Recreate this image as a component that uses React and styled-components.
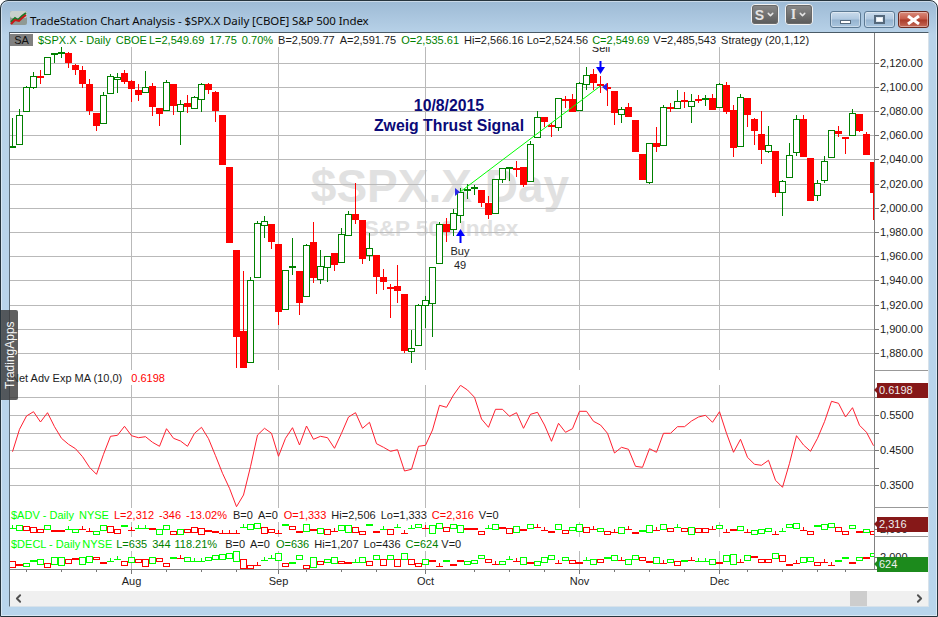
import styled, { createGlobalStyle } from "styled-components";
import { ChevronLeft, ChevronRight, ChevronDown } from "lucide-react";

const GREEN = "#008000";
const LIME = "#00ff00";
const RED = "#ff0000";
const INK = "#1c1c1c";
const GRID = "#b9b9b9";

// [colour, body top, body bottom, high, low] in screen pixels, first bar is 17 bars before Aug 3
const BARS = [
  ["g",147,147,118,147],["g",115,144,109,144],["g",87,111,86,111],["g",76,87,72,89],["r",77,77,70,84],
  ["g",57,74,57,74],["g",54,54,53,63],["g",53,53,47,58],["r",53,63,52,68],["r",65,70,64,75],
  ["r",70,84,66,88],["r",84,111,79,115],["r",113,126,113,131],["g",95,123,92,124],["g",76,93,74,93],
  ["g",77,79,73,93],["r",73,82,70,84],["r",81,89,80,102],["r",90,95,84,101],["g",87,92,71,92],
  ["r",86,107,83,116],["r",108,114,108,126],["g",82,110,80,110],["r",84,106,84,115],["g",104,111,100,145],
  ["r",103,107,95,113],["g",97,108,96,109],["g",84,99,83,112],["r",84,90,83,94],["r",92,111,91,122],
  ["r",115,165,115,165],["r",167,243,167,243],["r",250,337,250,368],["r",331,368,271,368],["g",280,362,277,362],
  ["g",223,277,221,277],["g",221,225,216,238],["r",224,242,224,249],["r",244,312,244,325],["g",270,309,270,309],
  ["g",267,267,238,275],["r",271,303,271,315],["g",245,296,244,296],["r",242,278,222,283],["g",266,279,250,284],
  ["g",256,267,256,282],["r",253,265,253,271],["g",234,262,228,262],["g",214,235,211,235],["r",214,220,183,224],
  ["r",220,259,220,264],["g",248,255,233,261],["r",255,277,255,294],["r",277,282,269,290],["r",288,288,284,318],
  ["r",286,291,265,303],["r",294,351,294,353],["g",348,351,330,363],["g",305,345,304,345],["g",300,305,296,328],
  ["g",267,303,267,337],["g",224,263,222,263],["r",224,232,218,242],["g",213,229,209,236],["g",192,215,188,223],
  ["g",190,190,184,199],["g",188,188,185,195],["r",190,203,190,207],["r",203,215,196,219],["g",179,213,179,213],
  ["g",168,179,168,183],["g",168,168,167,181],["r",169,169,161,177],["r",167,185,167,187],["g",144,181,141,181],
  ["g",117,137,111,137],["r",117,122,117,127],["r",126,126,123,137],["g",98,127,98,131],["r",100,100,96,108],
  ["r",99,112,94,112],["g",83,110,82,110],["g",75,84,67,90],["r",74,83,69,90],["r",85,85,76,93],
  ["r",88,88,83,106],["r",91,113,91,125],["g",109,114,107,123],["r",107,117,103,117],["r",120,152,120,152],
  ["r",154,180,154,180],["g",143,182,143,184],["r",143,147,127,152],["g",107,145,105,145],["r",108,108,103,112],
  ["g",101,108,90,108],["r",101,101,92,108],["g",101,106,94,123],["r",100,100,95,103],["g",99,99,95,106],
  ["r",98,110,94,110],["g",84,107,83,107],["r",85,112,82,114],["r",110,148,105,157],["g",97,146,94,146],
  ["r",98,115,98,127],["r",119,131,118,145],["r",134,150,111,164],["g",145,151,126,153],["r",151,193,151,197],
  ["g",181,192,180,216],["g",155,177,143,177],["g",119,152,115,156],["r",119,157,115,157],["r",158,201,158,201],
  ["g",183,195,180,201],["g",161,180,156,183],["g",130,157,130,157],["r",131,134,126,137],["r",138,138,138,154],
  ["g",113,135,109,135],["r",114,131,114,132],["r",134,155,132,155],["r",162,193,162,220],
];

const NET_ADV = [
  451.7,429.3,416,411.7,422,412.7,426.7,438.3,444.3,448.7,456.7,467.3,474.3,454.3,436.3,435.3,426.3,435.7,437.7,436.7,
  442.3,446.3,428.7,438.3,441,446.3,433.3,427.3,438.7,455.7,473.3,488.3,506.7,495,466.7,435,428.3,433.3,456.3,438.3,427.7,
  445,426,439.3,436.3,437.7,448.3,433.3,417,412.7,428.3,
  422.3,443.7,447.3,451.3,449.7,471,469.3,446.3,445.3,430,
  405.3,407.3,395,385.3,390,397.3,419,427.3,409.3,409.3,
  416.3,412.7,428.3,414.3,412.3,425,441.3,423.3,432.3,428.7,
  411.3,411.3,421.3,425,433.3,453,447.3,449.3,466.3,467.3,
  448.7,452.3,433.3,433.3,426.7,426.7,421,417,415.3,422.3,
  411.7,433.3,452.3,439.3,457.3,464.3,465.3,460.3,480.3,487.3,
  463.3,435.7,445,451.3,438.3,421.7,401.3,403.3,417,407.7,
  425.3,432.3,445.7,
];

// g/r hollow body "top-bottom", g/r thin cross, G/R thick dash; 1/3 pixel units below y=500
const ADV = "g84 g74-88 r78-90 r80-96 r88-96 g76-88 R92 R92 g88 g88-98 r88 r92 g94-102 g76-92 r78-95 r86-98 G78 r90 g85 g85 R88 g88-102 g74-86 r92-102 g88-102 r88-96 r80-96 r84-102 R92 R97 r98 r98 r100 g80 g72-86 g68-82 r80-98 r88-98 r98 G76 r78-88 R97 g72-92 R90 g84-100 r86-102 r92 g76-92 g74-94 r80-96 r92-102 G76 R97 g88 r88-102 g80 r98 g85 g72-82 r85 g76-100 g68-82 r82-94 g72-84 g76-96 R86 R86 r94-103 g85 g73-88 R83 r85-100 g78-96 R90 g73-85 r80 r90 R96 g72-88 r90-100 g82-92 g72-92 r82-96 r87 g84-94 r92-100 r96 g82-100 r86 R98 G92 g76-96 r90 g73-88 r85-94 g80 r85-94 g80-100 r83-94 r83-94 r87 g76-86 r96 R91 g79-91 r97 g91-103 g86-97 g85-94 r102 g92 g72-82 g70-85 r90 r92-100 G78 g72-88 g70-82 r82-94 r92-100 g76-86 R96 g88-97 r94-103".split(" ");
const DECL = "r184-202 R194 g190-200 G184 g176-190 r188-200 g172-192 g170-193 r176-187 R176 g172-193 g168-186 r170-177 R190 g183 g176 r184-196 g172-188 r178-188 r178-199 g172-190 r175-185 r190-200 G173 r173 g172-184 g182 g184 g172-182 g165-178 g162-178 g160-176 g154-184 r176-202 r194-202 r194 g180 g175 g160-182 r190-200 G188 g165-176 r194-202 g170-200 r182-190 g178-188 g170-188 r184-190 R188 g185 g170-184 r184-195 g164-176 r176-193 g165-178 r178-200 g158-176 r176-190 r188-198 g178-192 R182 r198 G182 R194 R184 g182-192 g180-190 g166-176 r176-186 r192 g182-192 g176 r183 g170-192 R190 g184-196 g172-186 g166-178 r190 g172-182 r180-190 R188 g180 g176-192 r178-187 G174 g164-180 r180 g176-192 g164-176 r172-180 R186 g172-190 r188 g178-188 r184-196 G182 r180 g182 g182 g176-192 R190 g166-184 g162-192 r186 g164-178 R172 r176-186 r178-187 g160-175 r166-184 R194 r190 g172-188 g172-184 r187-196 r187 r196 G182 G174 R190 g170-180 R175 g160-170".split(" ");

const MONTHS = [["Aug", 0], ["Sep", 21], ["Oct", 42], ["Nov", 64], ["Dec", 84]];
const WEEKS = [-15, -10, -5, 5, 10, 15, 25, 30, 35, 49, 54, 59, 69, 74, 79, 88, 93, 98, 102];
const PRICE_ROWS = [
  [63, "2,120.00"], [87, "2,100.00"], [111, "2,080.00"], [135, "2,060.00"], [159, "2,040.00"], [184, "2,020.00"],
  [208, "2,000.00"], [232, "1,980.00"], [256, "1,960.00"], [280, "1,940.00"], [305, "1,920.00"], [329, "1,900.00"], [353, "1,880.00"],
];
const NET_ROWS = [[397], [415, "0.5500"], [433], [450, "0.4500"], [468], [485, "0.3500"]];

const barX = (i) => 131.5 + 7 * i;
const lineX = (n) => barX(n - 17);

// [text, colour, gap after it]
const PRICE_LEGEND = [
  ["$SPX.X - Daily", GREEN, 5], ["CBOE", GREEN, 2], ["L=2,549.69", GREEN, 5], ["17.75", GREEN, 5], ["0.70%", GREEN, 5],
  ["B=2,509.77", INK, 5], ["A=2,591.75", INK, 5], ["O=2,535.61", GREEN, 5], ["Hi=2,566.16", INK, 3], ["Lo=2,524.56", INK, 4],
  ["C=2,549.69", GREEN, 4], ["V=2,485,543", INK, 5], ["Strategy (20,1,12)", INK, 0],
];
const ADV_LEGEND = [
  ["$ADV - Daily", LIME, 5], ["NYSE", LIME, 5], ["L=2,312", RED, 5], ["-346", RED, 5], ["-13.02%", RED, 6],
  ["B=0", INK, 5], ["A=0", INK, 6], ["O=1,333", RED, 5], ["Hi=2,506", INK, 5], ["Lo=1,333", INK, 5], ["C=2,316", RED, 5], ["V=0", INK, 0],
];
const DECL_LEGEND = [
  ["$DECL - Daily", LIME, 2], ["NYSE", LIME, 4], ["L=635", GREEN, 5], ["344", GREEN, 4], ["118.21%", GREEN, 8],
  ["B=0", INK, 5], ["A=0", INK, 6], ["O=636", GREEN, 5], ["Hi=1,207", INK, 5], ["Lo=436", INK, 5], ["C=624", GREEN, 3], ["V=0", INK, 0],
];

function Candle({ x, bar }) {
  const [c, top, bot, hi, lo] = bar;
  const color = c === "g" ? GREEN : RED;
  const flat = bot - top < 1;
  return (
    <g shapeRendering="crispEdges">
      <line x1={x} x2={x} y1={hi} y2={flat ? lo : top} stroke={color} />
      {!flat && <line x1={x} x2={x} y1={bot} y2={lo} stroke={color} />}
      {flat && <rect x={x - 3.5} y={top - 1} width={7} height={2} fill={color} />}
      {!flat && c === "r" && <rect x={x - 3.5} y={top} width={7} height={bot - top} fill={color} />}
      {!flat && c === "g" && <rect x={x - 3} y={top + 0.5} width={6} height={bot - top} fill="#fff" stroke={color} />}
    </g>
  );
}

function MiniCandle({ x, token }) {
  const kind = token[0];
  const color = kind.toLowerCase() === "g" ? LIME : RED;
  const [a, b] = token.slice(1).split("-").map((v) => 500 + Number(v) / 3);
  if (b) {
    return <rect x={x - 3} y={Math.round(a) + 0.5} width={6} height={Math.max(Math.round(b - a), 2)} fill="#fff" stroke={color} shapeRendering="crispEdges" />;
  }
  const y = Math.round(a);
  if (kind === "G" || kind === "R") {
    return <rect x={x - 3.5} y={y - 1} width={7} height={2} fill={color} shapeRendering="crispEdges" />;
  }
  return (
    <g stroke={color} shapeRendering="crispEdges">
      <line x1={x - 3.5} x2={x + 3.5} y1={y + 0.5} y2={y + 0.5} />
      <line x1={x} x2={x} y1={y - 3} y2={y + 1} />
    </g>
  );
}

function MonthLines({ y1, y2 }) {
  return MONTHS.map(([name, i]) => (
    <line key={name} x1={barX(i)} x2={barX(i)} y1={y1} y2={y2} stroke={GRID} shapeRendering="crispEdges" />
  ));
}

function Legend({ items }) {
  return items.map(([text, color, gap]) => (
    <LegendItem key={text} $color={color} $gap={gap}>{text}</LegendItem>
  ));
}

function PriceChart() {
  return (
    <Chart viewBox="10 47 864 324" width="864" height="324">
      <WatermarkBig x="440" y="202">$SPX.X Day</WatermarkBig>
      <WatermarkSmall x="441" y="236">S&amp;P 500 Index</WatermarkSmall>
      {PRICE_ROWS.map(([y]) => (
        <line key={y} x1="10" x2="874" y1={y + 0.5} y2={y + 0.5} stroke={GRID} shapeRendering="crispEdges" />
      ))}
      <MonthLines y1={47} y2={370} />
      {BARS.map((bar, n) => <Candle key={n} x={lineX(n)} bar={bar} />)}
      <line x1="460" y1="192" x2="601" y2="85.5" stroke={LIME} strokeWidth="1" />
      <polygon points="455,188 455,196 460,192" fill="#2a2ae8" />
      <polygon points="607,83 607,91 602,87" fill="#2a2ae8" />
      <polygon points="460.5,229 456,236 459.5,236 459.5,243 461.5,243 461.5,236 465,236" fill="#0000ff" />
      <polygon points="600.5,74 596,67 599.5,67 599.5,61 601.5,61 601.5,67 605,67" fill="#0000ff" />
      <Note x="460" y="255">Buy</Note>
      <Note x="460" y="269">49</Note>
      <Note x="601" y="52">Sell</Note>
      <Signal x="449" y="111">10/8/2015</Signal>
      <Signal x="449" y="131">Zweig Thrust Signal</Signal>
    </Chart>
  );
}

function NetChart() {
  const points = NET_ADV.map((y, n) => `${lineX(n)},${y}`).join(" ");
  return (
    <Chart viewBox="10 385 864 123" width="864" height="123">
      {NET_ROWS.map(([y]) => (
        <line key={y} x1="10" x2="874" y1={y + 0.5} y2={y + 0.5} stroke={GRID} shapeRendering="crispEdges" />
      ))}
      <MonthLines y1={385} y2={508} />
      <polyline points={points} fill="none" stroke="#ff2030" strokeWidth="1" />
    </Chart>
  );
}

function MiniChart({ tokens, top, height }) {
  return (
    <Chart viewBox={`10 ${top} 864 ${height}`} width="864" height={height}>
      <MonthLines y1={top} y2={top + height} />
      {tokens.map((token, n) => <MiniCandle key={n} x={lineX(n)} token={token} />)}
    </Chart>
  );
}

function ScaleLabels({ top, height, rows }) {
  return (
    <ScaleSvg viewBox={`875 ${top} 53 ${height}`} width="53" height={height}>
      {rows.map(([y, label]) => (
        <g key={y}>
          <line x1="875" x2="879" y1={y + 0.5} y2={y + 0.5} stroke="#777" shapeRendering="crispEdges" />
          {label && <AxisText x="880" y={y + 4}>{label}</AxisText>}
        </g>
      ))}
    </ScaleSvg>
  );
}

function TitleIcon() {
  return (
    <svg width="17" height="14" viewBox="0 0 17 14">
      <rect x="0" y="0" width="17" height="14" rx="2" fill="#8f9a94" />
      <rect x="0" y="0" width="17" height="7" rx="2" fill="#c9d0cc" />
      <polyline points="1,11 5,7 8,9 12,5 16,2" fill="none" stroke="#1c7a28" strokeWidth="2" />
      <polyline points="1,13 5,9 9,10 12,7 16,4" fill="none" stroke="#c81818" strokeWidth="2" />
    </svg>
  );
}

export default function App() {
  return (
    <>
      <Global />
      <Window>
        <TitleBar>
          <TitleIcon />
          <Title>TradeStation Chart Analysis - $SPX.X Daily [CBOE] S&amp;P 500 Index</Title>
          <Spacer />
          <ToolButton>S<ChevronDown size={9} strokeWidth={4} /></ToolButton>
          <ToolButton $serif>I<ChevronDown size={9} strokeWidth={4} /></ToolButton>
          <Captions>
            <CaptionButton><MinGlyph /></CaptionButton>
            <CaptionButton><MaxGlyph /></CaptionButton>
            <CaptionButton $close>
              <svg width="15" height="10" viewBox="0 0 15 10">
                <path d="M2 1 L13 9 M13 1 L2 9" stroke="#fff" strokeWidth="3" />
              </svg>
            </CaptionButton>
          </Captions>
        </TitleBar>
        <Client>
          <Pane $h={338}>
            <Plot>
              <LegendRow>
                <SymbolTag>SA</SymbolTag>
                <Legend items={PRICE_LEGEND} />
              </LegendRow>
              <PriceChart />
            </Plot>
            <Scale $line>
              <ScaleLabels top={33} height={337} rows={PRICE_ROWS} />
            </Scale>
          </Pane>
          <Pane $h={137}>
            <Plot>
              <LegendRow>
                <LegendItem $gap={9}>Net Adv Exp MA (10,0)</LegendItem>
                <LegendItem $color={RED}>0.6198</LegendItem>
              </LegendRow>
              <NetChart />
            </Plot>
            <Scale $line>
              <ScaleLabels top={371} height={136} rows={NET_ROWS} />
              <Badge $bg="#861818" $top={12}>0.6198</Badge>
            </Scale>
          </Pane>
          <Pane $h={29}>
            <Plot>
              <LegendRow>
                <Legend items={ADV_LEGEND} />
              </LegendRow>
              <MiniChart tokens={ADV} top={522} height={15} />
            </Plot>
            <Scale $line>
              <ScaleLabels top={508} height={28} rows={[[529, "2,000"]]} />
              <Badge $bg="#861818" $top={9}>2,316</Badge>
            </Scale>
          </Pane>
          <Pane $h={32}>
            <Plot>
              <LegendRow>
                <Legend items={DECL_LEGEND} />
              </LegendRow>
              <MiniChart tokens={DECL} top={551} height={18} />
            </Plot>
            <Scale>
              <ScaleLabels top={537} height={32} rows={[[557, "2,000"]]} />
              <Badge $bg="#1c8a1c" $top={20}>624</Badge>
            </Scale>
          </Pane>
          <TimeAxis>
            <Chart viewBox="10 570 918 21" width="918" height="21">
              {WEEKS.map((i) => (
                <line key={i} x1={barX(i)} x2={barX(i)} y1="570" y2="572" stroke="#777" shapeRendering="crispEdges" />
              ))}
              {MONTHS.map(([name, i]) => (
                <g key={name}>
                  <line x1={barX(i)} x2={barX(i)} y1="570" y2="574" stroke="#777" shapeRendering="crispEdges" />
                  <MonthText x={barX(i)} y="585">{name}</MonthText>
                </g>
              ))}
            </Chart>
          </TimeAxis>
          <ScrollBar>
            <ScrollArrow><ChevronLeft size={13} strokeWidth={3.5} /></ScrollArrow>
            <ScrollTrack><ScrollThumb /></ScrollTrack>
            <ScrollArrow><ChevronRight size={13} strokeWidth={3.5} /></ScrollArrow>
          </ScrollBar>
        </Client>
        <SideTab>TradingApps</SideTab>
      </Window>
    </>
  );
}

const Global = createGlobalStyle`
  html, body { margin: 0; padding: 0; background: #fff; }
  * { box-sizing: border-box; }
`;

const Window = styled.div`
  position: relative;
  width: 938px;
  height: 617px;
  display: flex;
  flex-direction: column;
  padding: 0 8px 9px;
  border: 1px solid #26343d;
  border-radius: 8px 8px 0 0;
  background: linear-gradient(#9dbad5 0, #b9d3e9 34px, #b9d5ec 100%);
  box-shadow: inset 0 0 0 1px rgba(255, 255, 255, 0.45);
  font-family: "Liberation Sans", Arial, sans-serif;
`;

const TitleBar = styled.div`
  height: 31px;
  flex: none;
  display: flex;
  align-items: flex-start;
  padding-top: 10px;
  padding-left: 1px;
`;

const Title = styled.div`
  margin: 1px 0 0 3px;
  font-family: "Noto Sans", sans-serif;
  font-size: 11.5px;
  letter-spacing: -0.1px;
  line-height: 18px;
  color: #0c0c0c;
`;

const Spacer = styled.div`
  flex: 1;
`;

const ToolButton = styled.div`
  width: 28px;
  height: 21px;
  margin-top: -7px;
  margin-right: 6px;
  display: flex;
  align-items: center;
  justify-content: center;
  gap: 2px;
  border: 1px solid #f2f2f2;
  border-radius: 4px;
  outline: 1px solid #6a6a6a;
  outline-offset: -2px;
  background: linear-gradient(#8a8a8a, #5a5a5a);
  color: #e4e4e4;
  font-family: ${(p) => (p.$serif ? '"Liberation Serif", serif' : '"Liberation Sans", sans-serif')};
  font-weight: bold;
  font-size: 14px;
`;

const Captions = styled.div`
  display: flex;
  gap: 3px;
  margin-left: 11px;
`;

const CaptionButton = styled.div`
  width: 31px;
  height: 17px;
  display: flex;
  align-items: center;
  justify-content: center;
  border: 1px solid ${(p) => (p.$close ? "#6b2a20" : "#5c7a94")};
  border-radius: 3px;
  box-shadow: inset 0 0 0 1px rgba(255, 255, 255, 0.4);
  background: ${(p) =>
    p.$close
      ? "linear-gradient(#d98c7c 0, #c65a48 48%, #a93a28 52%, #c56a58 100%)"
      : "linear-gradient(#cadbeb 0, #afc8e0 48%, #95b3cf 52%, #aac6df 100%)"};
`;

const MinGlyph = styled.div`
  width: 11px;
  height: 4px;
  margin-top: 5px;
  background: #fff;
  border: 1px solid #55697c;
`;

const MaxGlyph = styled.div`
  width: 11px;
  height: 9px;
  background: #fff;
  border: 2px solid #55697c;
  box-shadow: inset 0 0 0 1px #dfe9f2;
`;

const Client = styled.div`
  flex: 1;
  display: flex;
  flex-direction: column;
  background: #fff;
  border: 1px solid #d8e2ea;
  border-left-color: #5c6c78;
  border-top-color: #4a5a66;
`;

const Pane = styled.div`
  height: ${(p) => p.$h}px;
  flex: none;
  display: flex;
`;

const Plot = styled.div`
  width: 864px;
  display: flex;
  flex-direction: column;
`;

const LegendRow = styled.div`
  height: 14px;
  flex: none;
  display: flex;
  align-items: center;
  padding-left: 1px;
  white-space: nowrap;
  font-size: 11px;
  line-height: 14px;
  color: ${INK};
`;

const LegendItem = styled.span`
  margin-right: ${(p) => p.$gap || 0}px;
  color: ${(p) => p.$color || INK};
`;

const SymbolTag = styled.span`
  width: 23px;
  height: 12px;
  margin: 0 5px 0 -1px;
  background: #808080;
  color: #111;
  text-align: center;
  line-height: 12px;
`;

const Chart = styled.svg`
  display: block;
  flex: none;
`;

const WatermarkBig = styled.text`
  font-family: "Liberation Sans", sans-serif;
  font-weight: bold;
  font-size: 46px;
  text-anchor: middle;
  fill: #e1e1e1;
`;

const WatermarkSmall = styled(WatermarkBig)`
  font-size: 22.5px;
`;

const Note = styled.text`
  font-family: "Liberation Sans", sans-serif;
  font-size: 11px;
  text-anchor: middle;
  fill: #222;
`;

const Signal = styled.text`
  font-family: "Liberation Sans", sans-serif;
  font-weight: bold;
  font-size: 15.8px;
  text-anchor: middle;
  fill: #0a0a78;
`;

const Scale = styled.div`
  position: relative;
  width: 54px;
  border-left: 1px solid #808080;
  border-bottom: ${(p) => (p.$line ? "1px solid #999" : "none")};
`;

const ScaleSvg = styled.svg`
  display: block;
`;

const AxisText = styled.text`
  font-family: "Liberation Sans", sans-serif;
  font-size: 11px;
  fill: ${INK};
`;

const Badge = styled.div`
  position: absolute;
  z-index: 2;
  top: ${(p) => p.$top}px;
  left: 2px;
  right: 0;
  height: 15px;
  padding-left: 2px;
  background: ${(p) => p.$bg};
  color: #f0f0f0;
  font-size: 11px;
  line-height: 15px;
  &::before {
    content: "";
    position: absolute;
    left: -3px;
    top: 4px;
    border-top: 3px solid transparent;
    border-bottom: 3px solid transparent;
    border-right: 3px solid ${(p) => p.$bg};
  }
`;

const TimeAxis = styled.div`
  height: 22px;
  flex: none;
  border-top: 1px solid #808080;
`;

const MonthText = styled.text`
  font-family: "Liberation Sans", sans-serif;
  font-size: 11px;
  text-anchor: middle;
  fill: ${INK};
`;

const ScrollBar = styled.div`
  flex: 1;
  display: flex;
  background: #f0f0f0;
  color: #505050;
`;

const ScrollArrow = styled.div`
  width: 17px;
  flex: none;
  display: flex;
  align-items: center;
  justify-content: center;
`;

const ScrollTrack = styled.div`
  flex: 1;
  display: flex;
  justify-content: flex-end;
  padding-right: 44px;
`;

const ScrollThumb = styled.div`
  width: 17px;
  background: #cdcdcd;
`;

const SideTab = styled.div`
  position: absolute;
  left: 0;
  top: 309px;
  width: 17px;
  height: 90px;
  display: flex;
  align-items: center;
  justify-content: center;
  writing-mode: vertical-rl;
  transform: rotate(180deg);
  border-radius: 2px 0 0 2px;
  background: rgba(60, 60, 60, 0.82);
  color: #f4f4f4;
  font-size: 12px;
`;
